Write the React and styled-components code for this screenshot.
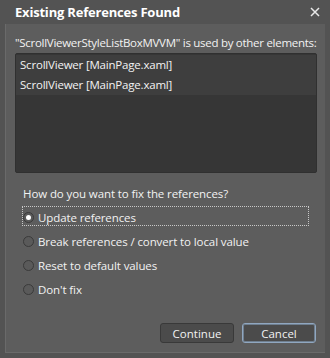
import React, { useState } from 'react';
import styled, { createGlobalStyle } from 'styled-components';

const GlobalStyle = createGlobalStyle`
  html, body {
    margin: 0;
    padding: 0;
    background: #535353;
  }
  * { box-sizing: border-box; }
`;

const Window = styled.div`
  width: 330px;
  height: 358px;
  background: #535353;
  display: flex;
  flex-direction: column;
  font-family: "Open Sans", "Noto Sans", sans-serif;
  color: #f0f0f0;
`;

const TitleBar = styled.div`
  height: 24px;
  display: flex;
  align-items: center;
  justify-content: space-between;
  padding: 0 10px 0 15px;
`;

const Title = styled.div`
  font-size: 13px;
  font-weight: bold;
  color: #ffffff;
  letter-spacing: -0.2px;
`;

const CloseIcon = styled.svg`
  width: 10px;
  height: 10px;
`;

const Body = styled.div`
  flex: 1;
  margin: 0 5px 5px 5px;
  background: #5d5d5d;
  border-left: 1px solid #6a6a6a;
  border-bottom: 1px solid #6a6a6a;
  display: flex;
  flex-direction: column;
  padding: 11px 8px 9px 9px;
`;

const Caption = styled.div`
  font-size: 11.5px;
  color: #f2f2f2;
  letter-spacing: -0.28px;
  white-space: nowrap;
  margin-bottom: 3px;
`;

const ListBox = styled.div`
  height: 120px;
  background: #363636;
  border: 1px solid #303030;
  border-radius: 2px;
  padding-top: 1px;
`;

const ListRow = styled.div`
  height: 20px;
  background: #3e3e3e;
  display: flex;
  align-items: center;
  padding-left: 4px;
  padding-bottom: 1px;
  font-size: 11.5px;
  color: #f2f2f2;
  letter-spacing: -0.2px;
`;

const Question = styled.div`
  margin: 13px 0 5px 8px;
  font-size: 11.5px;
  color: #f2f2f2;
  letter-spacing: -0.1px;
`;

const Options = styled.div`
  display: flex;
  flex-direction: column;
  gap: 4px;
  padding-left: 7px;
`;

const Option = styled.label`
  width: 287px;
  height: 20px;
  display: flex;
  align-items: center;
  gap: 4px;
  padding-top: 2px;
  font-size: 11.5px;
  color: #f2f2f2;
  letter-spacing: -0.1px;
  border: 1px dotted ${p => (p.$focused ? '#c8c8c8' : 'transparent')};
  cursor: default;
`;

const Radio = styled.span`
  width: 11px;
  height: 11px;
  flex-shrink: 0;
  border-radius: 50%;
  border: 1px solid #3a3a3a;
  background: #5a5a5a;
  display: flex;
  align-items: center;
  justify-content: center;
  &::after {
    content: '';
    width: 5px;
    height: 5px;
    border-radius: 50%;
    background: ${p => (p.$checked ? '#ffffff' : 'transparent')};
  }
`;

const Footer = styled.div`
  margin-top: auto;
  display: flex;
  justify-content: flex-end;
  gap: 8px;
  padding-right: 1px;
`;

const Button = styled.button`
  width: 74px;
  height: 20px;
  font-family: inherit;
  font-size: 11.5px;
  color: #f2f2f2;
  background: #4b4b4b;
  border: 1px solid ${p => (p.$default ? '#90a7c0' : '#393939')};
  box-shadow: ${p => (p.$default ? 'inset 0 0 0 1px #6f7f90' : 'none')};
  border-radius: 3px;
  padding: 0;
`;

const options = [
  'Update references',
  'Break references / convert to local value',
  'Reset to default values',
  "Don't fix",
];

export default function App() {
  const [choice, setChoice] = useState(0);

  return (
    <>
      <GlobalStyle />
      <Window>
        <TitleBar>
          <Title>Existing References Found</Title>
          <CloseIcon viewBox="0 0 10 10">
            <path d="M1 1 L9 9 M9 1 L1 9" stroke="#e8e8e8" strokeWidth="1.5" />
          </CloseIcon>
        </TitleBar>
        <Body>
          <Caption>"ScrollViewerStyleListBoxMVVM" is used by other elements:</Caption>
          <ListBox>
            <ListRow>ScrollViewer [MainPage.xaml]</ListRow>
            <ListRow>ScrollViewer [MainPage.xaml]</ListRow>
          </ListBox>
          <Question>How do you want to fix the references?</Question>
          <Options>
            {options.map((text, i) => (
              <Option key={text} $focused={i === 0} onClick={() => setChoice(i)}>
                <Radio $checked={choice === i} />
                {text}
              </Option>
            ))}
          </Options>
          <Footer>
            <Button>Continue</Button>
            <Button $default>Cancel</Button>
          </Footer>
        </Body>
      </Window>
    </>
  );
}
